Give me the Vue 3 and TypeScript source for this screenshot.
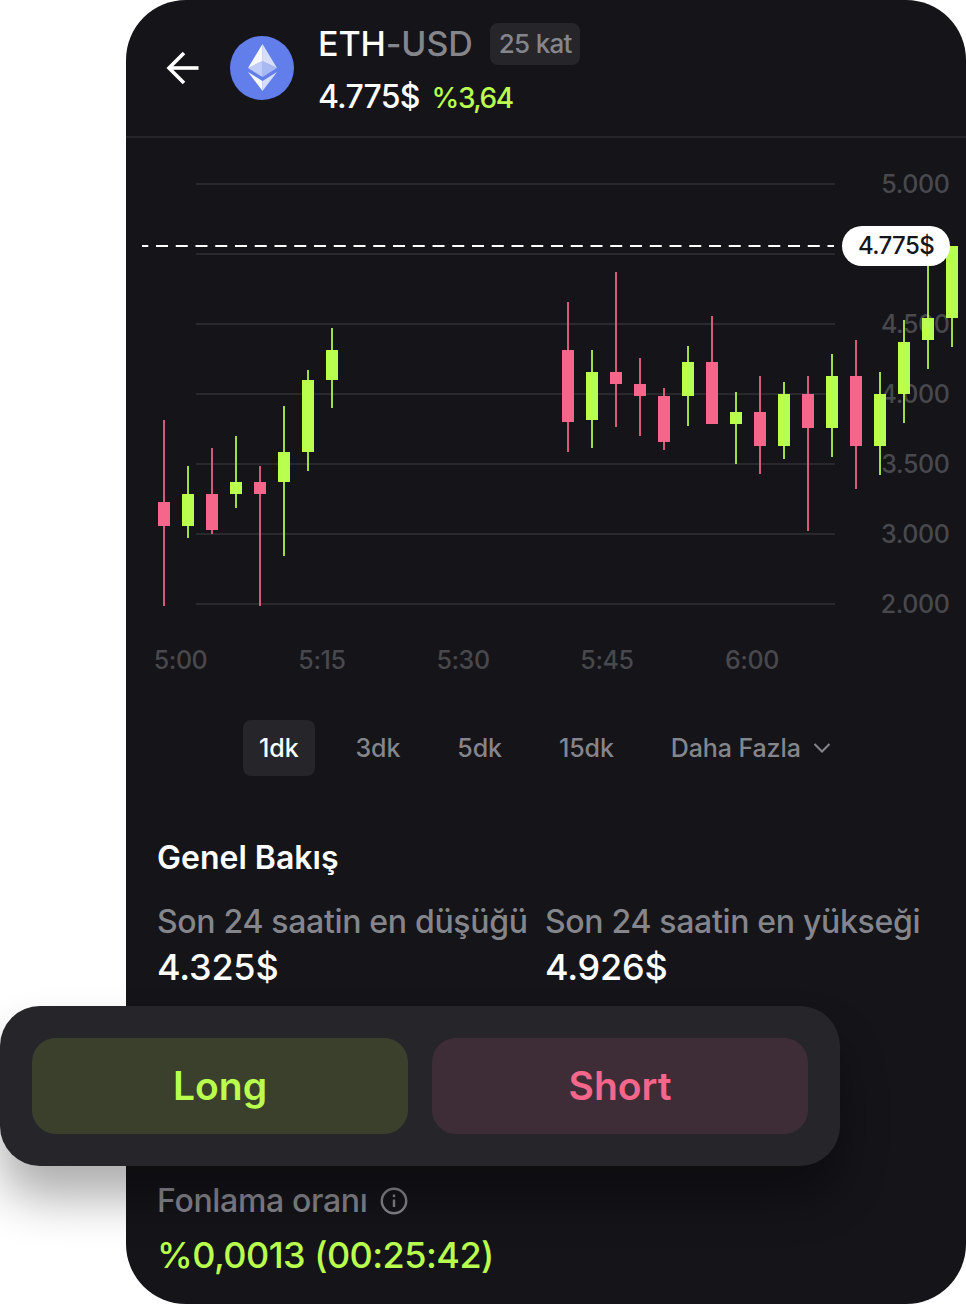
<template>
  <div class="page">
    <main class="phone">
      <header class="top">
        <button type="button" class="back" aria-label="Geri">
          <svg width="34" height="34" viewBox="0 0 34 34" fill="none" stroke="#fff" stroke-width="3.6">
            <path d="M32.5 17H3" />
            <path d="M18 2L3 17l15 15" />
          </svg>
        </button>
        <svg class="coin" width="64" height="64" viewBox="0 0 64 64">
          <circle cx="32" cy="32" r="32" fill="#627eea" />
          <path d="M32.5 8L18 32l14.5-7z" fill="#fff" fill-opacity=".95" />
          <path d="M32.5 8L47 32l-14.5-7z" fill="#fff" fill-opacity=".75" />
          <path d="M32.5 25L18 32l14.5 9z" fill="#fff" fill-opacity=".6" />
          <path d="M32.5 25L47 32l-14.5 9z" fill="#fff" fill-opacity=".45" />
          <path d="M18 36l14.5 19V45z" fill="#fff" fill-opacity=".95" />
          <path d="M47 36L32.5 55V45z" fill="#fff" fill-opacity=".75" />
        </svg>
        <div class="ticker">
          <div class="ticker-row">
            <h1 class="pair">ETH<span>-USD</span></h1>
            <span class="badge">25 kat</span>
          </div>
          <div class="price-row">
            <span class="price">4.775$</span>
            <span class="change">%3,64</span>
          </div>
        </div>
      </header>

      <section class="chart">
        <svg class="chart-svg" width="840" height="582" viewBox="126 138 840 582">
          <line v-for="y in gridLines" :key="y" x1="196" x2="835" :y1="y" :y2="y" class="grid" />
          <text v-for="tick in yTicks" :key="tick.label" x="949.5" :y="tick.y + 10" text-anchor="end" class="axis">{{ tick.label }}</text>
          <text v-for="tick in xTicks" :key="tick.label" :x="tick.x" y="669" text-anchor="middle" class="axis">{{ tick.label }}</text>
          <line x1="142" x2="834" y1="246" y2="246" class="dash" />
          <g v-for="c in candles" :key="c.x" :fill="c.up ? green : pink">
            <rect :x="c.x - 1" :y="c.high" width="2" :height="c.low - c.high" fill-opacity=".85" />
            <rect :x="c.x - 6" :y="c.top" width="12" :height="c.bottom - c.top" />
          </g>
        </svg>
        <span class="last-price">4.775$</span>
      </section>

      <nav class="tabs">
        <button v-for="tab in tabs" :key="tab" type="button" class="tab" :class="{ active: tab === '1dk' }">{{ tab }}</button>
        <button type="button" class="tab more">
          Daha Fazla
          <svg width="18" height="10" viewBox="0 0 18 10" fill="none" stroke="#85858c" stroke-width="2">
            <path d="M1.5 1l7.5 7.5L16.5 1" />
          </svg>
        </button>
      </nav>

      <section class="overview">
        <h2>Genel Bakış</h2>
        <div class="stats">
          <div v-for="stat in stats" :key="stat.label" class="stat">
            <span class="label">{{ stat.label }}</span>
            <span class="value">{{ stat.value }}</span>
          </div>
        </div>
      </section>

      <section class="funding">
        <span class="label funding-label">
          Fonlama oranı
          <svg width="28" height="28" viewBox="0 0 28 28" fill="none" stroke="#85858c" stroke-width="2.4">
            <circle cx="14" cy="14" r="12.2" />
            <path d="M14 12.5V20" />
            <path d="M14 7.5v2.6" />
          </svg>
        </span>
        <span class="value rate">%0,0013 (00:25:42)</span>
      </section>
    </main>

    <div class="actions">
      <button type="button" class="action long">Long</button>
      <button type="button" class="action short">Short</button>
    </div>
  </div>
</template>

<script setup lang="ts">
interface Candle {
  x: number;
  high: number;
  low: number;
  top: number;
  bottom: number;
  up: boolean;
}

const green = '#b9ff4d';
const pink = '#f5668a';

const gridLines = [184, 254, 324, 394, 464, 534, 604];

const yTicks = [
  { label: '5.000', y: 183 },
  { label: '4.500', y: 323 },
  { label: '4.000', y: 393 },
  { label: '3.500', y: 463 },
  { label: '3.000', y: 533 },
  { label: '2.000', y: 603 },
];

const xTicks = [
  { label: '5:00', x: 180.5 },
  { label: '5:15', x: 322 },
  { label: '5:30', x: 463 },
  { label: '5:45', x: 607 },
  { label: '6:00', x: 752 },
];

// x, high, low, body top, body bottom, rising
const rows: [number, number, number, number, number, boolean][] = [
  [164, 420, 606, 502, 526, false],
  [188, 466, 538, 494, 526, true],
  [212, 448, 534, 494, 530, false],
  [236, 436, 508, 482, 494, true],
  [260, 466, 606, 482, 494, false],
  [284, 406, 556, 452, 482, true],
  [308, 370, 471, 380, 452, true],
  [332, 328, 408, 350, 380, true],
  [568, 302, 452, 350, 422, false],
  [592, 350, 448, 372, 420, true],
  [616, 272, 427, 372, 384, false],
  [640, 358, 436, 384, 396, false],
  [664, 388, 450, 396, 442, false],
  [688, 346, 426, 362, 396, true],
  [712, 316, 424, 362, 424, false],
  [736, 392, 464, 412, 424, true],
  [760, 376, 474, 412, 446, false],
  [784, 382, 459, 394, 446, true],
  [808, 376, 531, 394, 428, false],
  [832, 354, 457, 376, 428, true],
  [856, 340, 489, 376, 446, false],
  [880, 372, 475, 394, 446, true],
  [904, 320, 423, 342, 394, true],
  [928, 262, 369, 318, 340, true],
  [952, 246, 347, 246, 318, true],
];

const candles: Candle[] = rows.map(([x, high, low, top, bottom, up]) => ({ x, high, low, top, bottom, up }));

const tabs = ['1dk', '3dk', '5dk', '15dk'];

const stats = [
  { label: 'Son 24 saatin en düşüğü', value: '4.325$' },
  { label: 'Son 24 saatin en yükseği', value: '4.926$' },
];
</script>

<style scoped>
.page {
  position: relative;
  width: 966px;
  height: 1304px;
  overflow: hidden;
  background: #fff;
  font-family: Inter, "Noto Sans", sans-serif;
  font-weight: 450;
}

button {
  border: 0;
  background: none;
  padding: 0;
  font: inherit;
}

.phone {
  display: flex;
  flex-direction: column;
  width: 840px;
  height: 1304px;
  margin-left: 126px;
  border-radius: 60px;
  background: #141419;
  color: #fff;
}

.top {
  display: flex;
  align-items: flex-start;
  box-sizing: border-box;
  height: 138px;
  padding: 23px 0 0 40px;
  border-bottom: 2px solid #25252a;
}

.back {
  display: flex;
  margin-top: 28px;
}

.coin {
  margin: 13px 0 0 30px;
}

.ticker {
  margin-left: 24px;
}

.ticker-row {
  display: flex;
  align-items: center;
  gap: 17px;
}

.pair {
  margin: 0;
  font-size: 34px;
  font-weight: 450;
  line-height: 42px;
  letter-spacing: -0.1px;
}

.pair span {
  color: #85858c;
}

.badge {
  padding: 0 8px 0 9px;
  border-radius: 8px;
  background: #25252a;
  color: #85858c;
  font-size: 26px;
  line-height: 42px;
  letter-spacing: -0.7px;
}

.price-row {
  display: flex;
  align-items: baseline;
  gap: 12px;
  margin-top: 12px;
  line-height: 40px;
}

.price {
  font-size: 32px;
  letter-spacing: -0.8px;
}

.change {
  color: #b9ff4d;
  font-size: 28px;
  letter-spacing: -1.5px;
}

.chart {
  position: relative;
  height: 582px;
}

.chart-svg {
  display: block;
}

.grid {
  stroke: #28282d;
  stroke-width: 2;
}

.dash {
  stroke: #fff;
  stroke-width: 2;
  stroke-dasharray: 12 7.75;
  stroke-dashoffset: 5.75;
}

.axis {
  fill: #48484d;
  font-size: 25px;
  letter-spacing: -0.4px;
}

.last-price {
  position: absolute;
  left: 716px;
  top: 88px;
  width: 108px;
  height: 40px;
  border-radius: 20px;
  background: #fff;
  color: #15151a;
  font-size: 24px;
  letter-spacing: -0.6px;
  line-height: 40px;
  text-align: center;
}

.tabs {
  display: flex;
  justify-content: flex-start;
  align-items: center;
  gap: 25px;
  padding-left: 117px;
}

.tab {
  height: 56px;
  padding: 0 16px;
  border-radius: 8px;
  color: #85858c;
  font-size: 25px;
  letter-spacing: -0.1px;
}

.tab.active {
  background: #25252a;
  color: #fff;
}

.more {
  display: flex;
  align-items: center;
  gap: 12px;
}

.overview {
  margin-top: 62px;
  padding-left: 31px;
}

.overview h2 {
  margin: 0;
  font-size: 32px;
  font-weight: 600;
  line-height: 40px;
}

.stats {
  display: grid;
  grid-template-columns: 388px 1fr;
  margin-top: 24px;
}

.stat {
  display: flex;
  flex-direction: column;
  gap: 5px;
}

.label {
  color: #85858c;
  font-size: 32px;
  line-height: 40px;
  letter-spacing: -0.32px;
  white-space: nowrap;
}

.value {
  font-size: 36px;
  line-height: 40px;
  letter-spacing: -0.2px;
}

.funding {
  display: flex;
  flex-direction: column;
  margin-top: 194px;
  padding-left: 31px;
  gap: 14px;
}

.funding-label {
  display: flex;
  align-items: center;
  gap: 12px;
}

.rate {
  color: #b9ff4d;
  letter-spacing: -0.55px;
}

.actions {
  position: absolute;
  left: 0;
  top: 1006px;
  display: flex;
  gap: 24px;
  box-sizing: border-box;
  width: 840px;
  height: 160px;
  padding: 32px;
  border-radius: 40px;
  background: #25252a;
  box-shadow: 0 32px 48px rgba(0, 0, 0, 0.32);
}

.action {
  flex: 1;
  padding-bottom: 2px;
  border-radius: 24px;
  font-size: 39px;
  font-weight: 600;
}

.long {
  background: #3b402c;
  color: #b9ff4d;
}

.short {
  background: #3e2d37;
  color: #f5668a;
}
</style>
